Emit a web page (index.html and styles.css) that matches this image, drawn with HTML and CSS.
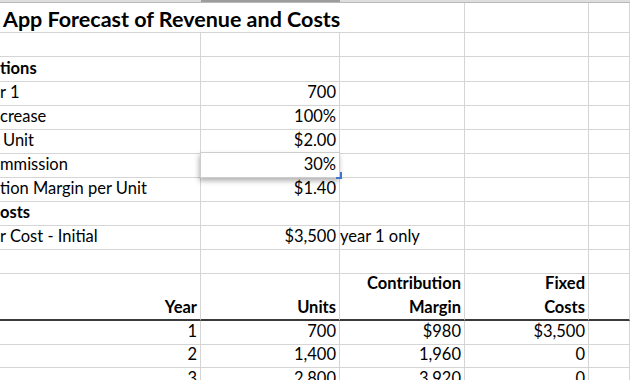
FILE: index.html
```html
<!DOCTYPE html>
<html>
<head>
<meta charset="utf-8">
<link rel="stylesheet" href="styles.css">
</head>
<body>
<div class="colbar"><div class="seg"></div><div class="seg on"></div><div class="seg"></div></div>
<div class="sheet">
  <div class="c title span3">App Forecast of Revenue and Costs</div><div class="c"></div><div class="c"></div>

  <div class="c"></div><div class="c"></div><div class="c"></div><div class="c"></div><div class="c"></div>

  <div class="c b">tions</div><div class="c"></div><div class="c"></div><div class="c"></div><div class="c"></div>

  <div class="c">r 1</div><div class="c r">700</div><div class="c"></div><div class="c"></div><div class="c"></div>

  <div class="c">crease</div><div class="c r">100%</div><div class="c"></div><div class="c"></div><div class="c"></div>

  <div class="c ind">Unit</div><div class="c r">$2.00</div><div class="c"></div><div class="c"></div><div class="c"></div>

  <div class="c">mmission</div><div class="c r sel">30%<span class="handle"></span></div><div class="c"></div><div class="c"></div><div class="c"></div>

  <div class="c">tion Margin per Unit</div><div class="c r">$1.40</div><div class="c"></div><div class="c"></div><div class="c"></div>

  <div class="c b">osts</div><div class="c"></div><div class="c"></div><div class="c"></div><div class="c"></div>

  <div class="c">r Cost - Initial</div><div class="c r">$3,500</div><div class="c">year 1 only</div><div class="c"></div><div class="c"></div>

  <div class="c"></div><div class="c"></div><div class="c"></div><div class="c"></div><div class="c"></div>

  <div class="c r b hd">Year</div><div class="c r b hd">Units</div><div class="c r b hd">Contribution<br>Margin</div><div class="c r b hd">Fixed<br>Costs</div><div class="c hd"></div>

  <div class="c r">1</div><div class="c r">700</div><div class="c r">$980</div><div class="c r">$3,500</div><div class="c"></div>

  <div class="c r">2</div><div class="c r">1,400</div><div class="c r">1,960</div><div class="c r">0</div><div class="c"></div>

  <div class="c r">3</div><div class="c r">2,800</div><div class="c r">3,920</div><div class="c r">0</div><div class="c"></div>
</div>
</body>
</html>
```
FILE: styles.css
```css
html, body {
  margin: 0;
  padding: 0;
  background: #fff;
  overflow: hidden;
}
body {
  width: 630px;
  height: 380px;
  font-family: Lato, "Liberation Sans", sans-serif;
  color: #000;
}
.colbar {
  display: grid;
  grid-template-columns: 201px 139px 1fr;
  height: 3px;
  box-sizing: border-box;
  border-bottom: 1px solid #b9b9b9;
}
.seg { background: #dedede; }
.seg.on { background: #9d9d9d; }
.sheet {
  display: grid;
  grid-template-columns: 201px 139px 125px 124px 1fr;
  grid-template-rows: 30px 24px 25px 24px 24px 24px 24px 24px 24px 24px 24px 47px 24px 23px 24px;
}
.c {
  box-sizing: border-box;
  border-right: 1px solid #d5d5d5;
  border-bottom: 1px solid #d5d5d5;
  display: flex;
  align-items: flex-end;
  justify-content: flex-start;
  padding: 0 3px 4px 0;
  font-size: 16.5px;
  line-height: 18px;
  white-space: nowrap;
  min-width: 0;
}
.c.r { justify-content: flex-end; text-align: right; }
.c.b { font-weight: 700; }
.c.ind { padding-left: 3px; }
.title {
  grid-column: span 3;
  font-weight: 700;
  font-size: 21.5px;
  padding-left: 3px;
  padding-bottom: 4px;
}
.hd {
  border-bottom: 2px solid #3a3a3a;
  line-height: 24px;
  padding-bottom: 0;
}
.sel {
  position: relative;
  z-index: 1;
  background: #fff;
  border: 1px solid #cdcdcd;
  margin-top: -2px;
  margin-left: -1px;
  box-shadow: -1px 3px 5px rgba(0, 0, 0, 0.3);
}
.handle {
  position: absolute;
  right: -3px;
  bottom: -2px;
  width: 4px;
  height: 5px;
  border-right: 2px solid #3f76c9;
  border-bottom: 2px solid #3f76c9;
}
```
